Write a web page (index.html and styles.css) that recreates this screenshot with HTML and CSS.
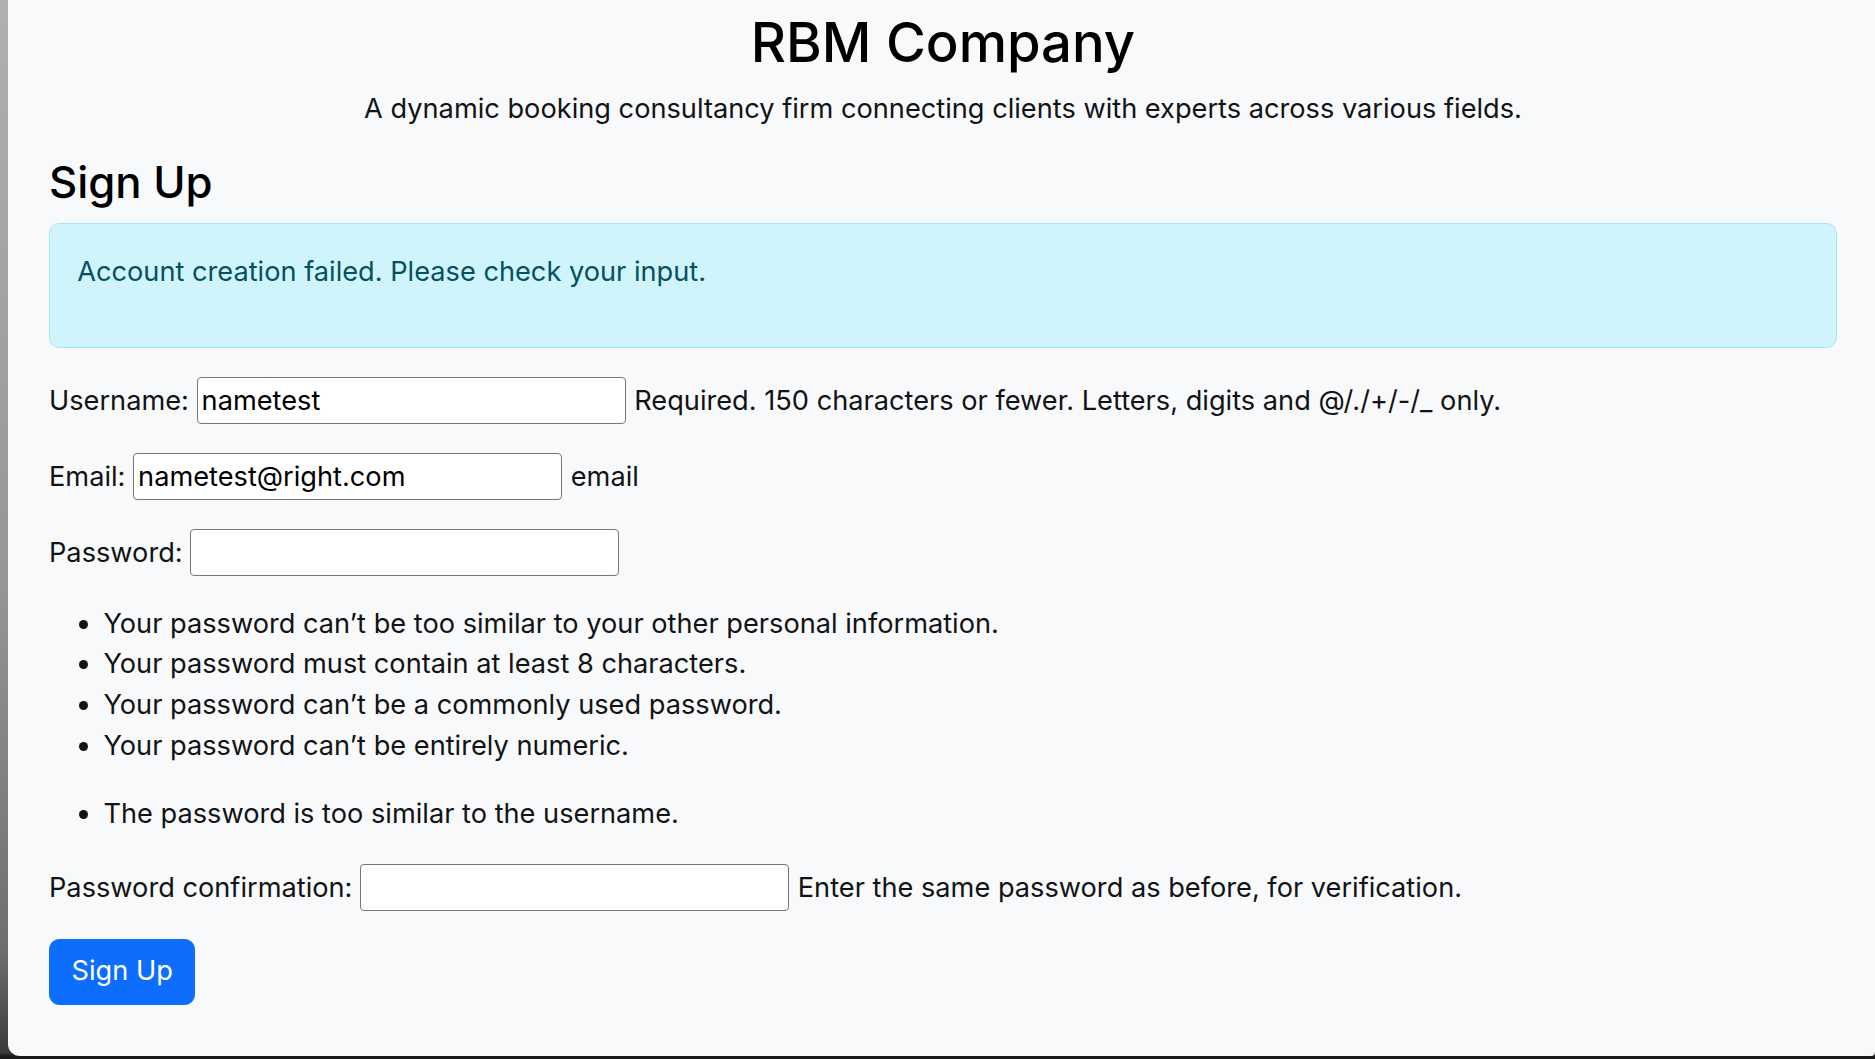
FILE: index.html
```html
<!DOCTYPE html>
<html lang="en">
<head>
<meta charset="utf-8">
<title>Sign Up - RBM Company</title>
<link rel="stylesheet" href="styles.css">
</head>
<body>
<div class="window">
  <header class="site-header">
    <h2 class="site-title">RBM Company</h2>
    <p class="site-tagline">A dynamic booking consultancy firm connecting clients with experts across various fields.</p>
  </header>
  <main class="content">
    <h4 class="page-heading">Sign Up</h4>
    <div class="alert alert-info">
      <p>Account creation failed. Please check your input.</p>
    </div>
    <form class="signup-form">
      <p class="field"><label for="id_username">Username:</label> <input class="field-input" type="text" id="id_username" value="nametest"> <span class="helptext">Required. 150 characters or fewer. Letters, digits and @/./+/-/_ only.</span></p>
      <p class="field"><label for="id_email">Email:</label> <input class="field-input" type="email" id="id_email" value="nametest@right.com"> <span class="helptext">email</span></p>
      <p class="field"><label for="id_password1">Password:</label> <input class="field-input" type="password" id="id_password1"></p>
      <ul class="helplist">
        <li>Your password can’t be too similar to your other personal information.</li>
        <li>Your password must contain at least 8 characters.</li>
        <li>Your password can’t be a commonly used password.</li>
        <li>Your password can’t be entirely numeric.</li>
      </ul>
      <ul class="helplist errorlist">
        <li>The password is too similar to the username.</li>
      </ul>
      <p class="field"><label for="id_password2">Password confirmation:</label> <input class="field-input" type="password" id="id_password2"> <span class="helptext">Enter the same password as before, for verification.</span></p>
      <button class="btn-primary" type="submit">Sign Up</button>
    </form>
  </main>
</div>
</body>
</html>
```
FILE: styles.css
```css
html, body {
  margin: 0;
  padding: 0;
}

body {
  height: 1059px;
  overflow: hidden;
  background: linear-gradient(to bottom, #b0b0b0 0%, #969696 55%, #6e6e6e 90%, #3a3a3a 99.4%, #1b1b1b 99.7%);
  font-family: Inter, "Noto Sans", "Liberation Sans", sans-serif;
  font-size: 27.2px;
  line-height: 40.8px;
  color: #111315;
}

.window {
  margin-left: 8px;
  height: 1056px;
  box-sizing: border-box;
  padding: 10px 38px 0 41px;
  background: #f8f9fa;
  border-bottom-left-radius: 12px;
  border-bottom-right-radius: 4px;
}

.site-title {
  margin: 0 0 13.6px;
  font-size: 54.4px;
  font-weight: 500;
  line-height: 1.2;
  text-align: center;
  color: #000;
}

.site-tagline {
  margin: 0 0 27.2px;
  text-align: center;
}

.page-heading {
  margin: 0 0 14.2px;
  font-size: 43.7px;
  font-weight: 500;
  line-height: 1.2;
  color: #000;
}

.alert {
  padding: 27.2px;
  margin-bottom: 27.2px;
  border: 1px solid #9eeaf9;
  border-radius: 10.2px;
  background: #cff4fc;
  color: #055160;
}

.alert p {
  margin: 0 0 27.2px;
}

.field {
  margin: 0 0 27.2px;
  white-space: nowrap;
}

.field-input {
  box-sizing: border-box;
  width: 429px;
  height: 47px;
  padding: 0 4px;
  margin: 2px 1px 0 0;
  border: 1px solid #767676;
  border-radius: 4px;
  background: #fff;
  font: inherit;
  color: #000;
  vertical-align: baseline;
}

.helplist {
  margin: 0 0 27.2px;
  padding-left: 54.4px;
}

.btn-primary {
  margin-top: 0.8px;
  padding: 11.4px 21.6px;
  border: 1px solid #0d6efd;
  border-radius: 10.2px;
  background: #0d6efd;
  color: #fff;
  font: inherit;
  line-height: 40.8px;
  cursor: pointer;
}
```
